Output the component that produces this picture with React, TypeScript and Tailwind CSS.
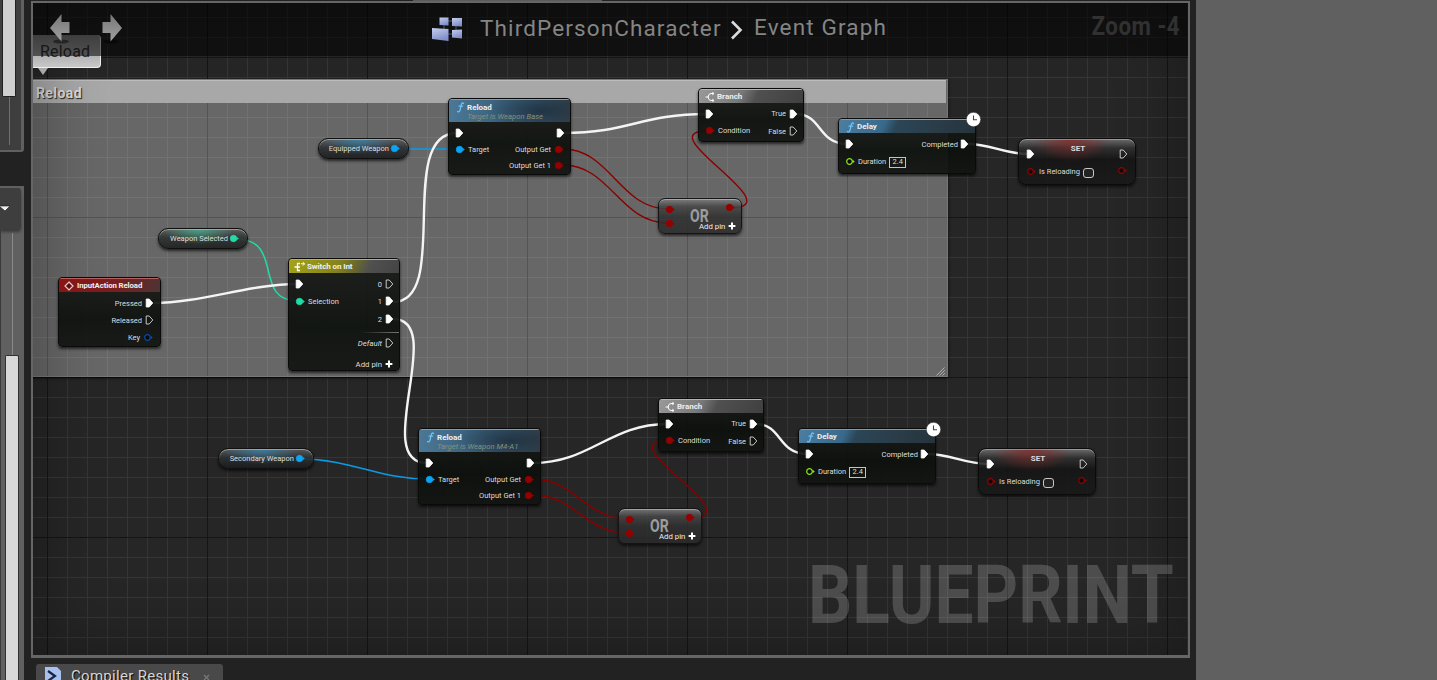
import React from "react";

type Kind = "exec" | "execOpen" | "data" | "dataOpen";

function Pin({ kind, color = "#fff" }: { kind: Kind; color?: string }) {
  if (kind === "exec" || kind === "execOpen") {
    const open = kind === "execOpen";
    return (
      <svg width="9" height="10" viewBox="0 0 9 10" className="-mt-px block shrink-0">
        <path
          d="M1.2 1H4.2L7.8 5L4.2 9H1.2Z"
          fill={open ? "none" : "#fff"}
          stroke={open ? "#d8d8d8" : "#fff"}
          strokeWidth={open ? 0.9 : 0.8}
          strokeLinejoin="round"
        />
      </svg>
    );
  }
  const open = kind === "dataOpen";
  return (
    <svg width="11" height="9" viewBox="0 0 11 9" className="-mt-px block shrink-0">
      <circle cx="4.5" cy="4.5" r={open ? 2.8 : 3.2} fill={open ? "#0a0a0a" : color} stroke={color} strokeWidth={open ? 1.2 : 0.8} />
      <path d="M7.6 2.8L9.8 4.5L7.6 6.2Z" fill={color} />
    </svg>
  );
}

function Plus() {
  return (
    <svg width="8" height="8" viewBox="0 0 8 8" className="-mt-px block shrink-0">
      <path d="M4 0.6V7.4M0.6 4H7.4" stroke="#fff" strokeWidth="2" />
    </svg>
  );
}

function FIcon() {
  return (
    <svg width="9" height="11" viewBox="0 0 9 11" className="block shrink-0">
      <path d="M7.6 1.6C6.8 0.6 5.6 0.8 5.200 2.8L4 8.2C3.6 9.900 2.4 10.2 1.6 9.5M3 4.2H6.600" fill="none" stroke="#6fc0f5" strokeWidth="1.3" strokeLinecap="round" />
    </svg>
  );
}

const nodeBase =
  "absolute flex flex-col overflow-hidden border border-[#0a0a0a] bg-[linear-gradient(180deg,rgba(24,26,24,0.92),rgba(12,16,12,0.93)_60%,rgba(18,20,18,0.93))] shadow-[0_2px_3px_rgba(0,0,0,0.65)] rounded-[4px]";
const blueHead =
  "bg-[radial-gradient(ellipse_45%_90%_at_75%_50%,rgba(24,36,48,0.65),transparent),linear-gradient(90deg,#4b7896,#3a607c_45%,#33536a_75%,#32424c)]";

function ReloadNode({ pos, target }: { pos: string; target: string }) {
  return (
    <div className={`${nodeBase} h-[77px] w-[123px] ${pos}`}>
      <div className={`flex h-[23px] shrink-0 border-t border-[#7ba0b8] pl-[7px] pt-[2px] ${blueHead}`}>
        <FIcon />
        <div className="ml-[2px] flex flex-col">
          <span className="h-[9px] text-[8px] font-bold leading-[11px] text-[#eee]">Reload</span>
          <span className="whitespace-nowrap text-[7.7px] italic leading-[11px] text-[#83917f]">{target}</span>
        </div>
      </div>
      <div className="flex justify-between pt-[3.5px]">
        <div className="flex flex-col pl-[6px]">
          <div className="flex h-4 items-center"><Pin kind="exec" /></div>
          <div className="flex h-4 items-center gap-[2px]"><Pin kind="data" color="#0ba4f4" />Target</div>
        </div>
        <div className="flex flex-col items-end pr-[5px]">
          <div className="flex h-4 items-center"><Pin kind="exec" /></div>
          <div className="flex h-4 items-center gap-[3px]">Output Get<Pin kind="data" color="#960000" /></div>
          <div className="flex h-4 items-center gap-[3px]">Output Get 1<Pin kind="data" color="#960000" /></div>
        </div>
      </div>
    </div>
  );
}

function BranchNode({ pos }: { pos: string }) {
  return (
    <div className={`${nodeBase} h-[54px] w-[106px] ${pos}`}>
      <div className="flex h-[14px] shrink-0 items-center gap-[2px] border-t border-[#b5b5b5] bg-[linear-gradient(115deg,#9a9a9a,#787878_40%,#505050_55%,#404040)] pl-[6px] pt-px">
        <svg width="10" height="10" viewBox="0 0 10 10" className="block">
          <path d="M4 5H0.500M8.500 1.500H6Q3.500 1.500 3 5Q3.500 8.500 6 8.500H8.500M7.300 0.200L9 1.500L7.300 2.800M7.300 7.200L9 8.500L7.300 9.800" fill="none" stroke="#fff" strokeWidth="1" />
        </svg>
        <span className="text-[8px] font-bold text-[#eee]">Branch</span>
      </div>
      <div className="flex justify-between pt-[2.5px]">
        <div className="flex flex-col pl-[6px]">
          <div className="flex h-[17px] items-center"><Pin kind="exec" /></div>
          <div className="flex h-[17px] items-center gap-[2px]"><Pin kind="data" color="#960000" />Condition</div>
        </div>
        <div className="flex flex-col items-end pr-[5px]">
          <div className="flex h-[17px] items-center gap-[3px]">True<Pin kind="exec" /></div>
          <div className="flex h-[18px] items-center gap-[3px]">False<Pin kind="execOpen" /></div>
        </div>
      </div>
    </div>
  );
}

function DelayNode({ pos, clock }: { pos: string; clock: string }) {
  return (
    <>
      <div className={`${nodeBase} h-[56px] w-[138px] ${pos}`}>
        <div className="flex h-[14px] shrink-0 items-center gap-[2px] border-t border-[#6aa3c6] bg-[linear-gradient(115deg,#4b7fa1,#39698a_33%,#2b4657_42%,#2a3d49_70%,#26333b)] pl-[7px] pt-px">
          <FIcon />
          <span className="text-[8px] font-bold text-[#eee]">Delay</span>
        </div>
        <div className="flex justify-between pt-[2.5px]">
          <div className="flex flex-col pl-[6px]">
            <div className="flex h-[18px] items-center"><Pin kind="exec" /></div>
            <div className="flex h-[17px] items-center gap-[2px]">
              <Pin kind="dataOpen" color="#8ee61e" />Duration
              <span className="ml-[1px] flex h-[11px] w-[17px] items-center justify-center border border-[#c4c4c4]">2.4</span>
            </div>
          </div>
          <div className="flex h-[18px] items-center gap-[2px] pr-[6px]">Completed<Pin kind="exec" /></div>
        </div>
      </div>
      <svg width="16" height="16" viewBox="0 0 16 16" className={`absolute ${clock}`}>
        <circle cx="7.500" cy="7.500" r="7.200" fill="#fff" stroke="#222" strokeWidth="0.5" />
        <path d="M7.500 3.500V7.700H11" fill="none" stroke="#444" strokeWidth="1.1" />
      </svg>
    </>
  );
}

function SetNode({ pos }: { pos: string }) {
  return (
    <div className={`absolute flex h-[47px] w-[118px] flex-col overflow-hidden rounded-[8px] border border-[#0b0b0b] bg-[radial-gradient(ellipse_34%_50%_at_45%_0%,rgba(135,40,40,0.8),transparent),linear-gradient(180deg,rgba(115,115,115,0.9),rgba(48,48,48,0.9)_20%,rgba(20,20,20,0.88)_45%,rgba(22,24,22,0.85))] shadow-[inset_0_1px_0_rgba(200,200,200,0.5),0_2px_3px_rgba(0,0,0,0.6)] ${pos}`}>
      <span className="mt-[5px] h-[10px] pl-[2px] text-center text-[8px] font-bold leading-[10px] text-[#ddd]">SET</span>
      <div className="-mt-[5px] flex items-start justify-between px-[7px]">
        <div className="flex flex-col">
          <div className="flex h-[11px] items-center"><Pin kind="exec" /></div>
          <div className="mt-[4px] flex h-[16px] items-center gap-[2px]">
            <Pin kind="dataOpen" color="#960000" />
            <span className="-mt-px">Is Reloading</span>
            <span className="ml-[1px] mt-[2px] block h-[10px] w-[11px] rounded-[3px] border-[1.5px] border-[#c8c8c8] bg-[#222]" />
          </div>
        </div>
        <div className="flex flex-col items-end">
          <div className="flex h-[11px] items-center"><Pin kind="execOpen" /></div>
          <div className="mt-[4px] flex h-[13px] items-center"><Pin kind="dataOpen" color="#960000" /></div>
        </div>
      </div>
    </div>
  );
}

function OrNode({ pos }: { pos: string }) {
  return (
    <div className={`absolute flex h-[36px] w-[84px] overflow-hidden rounded-[7px] border border-[#141414] bg-[linear-gradient(180deg,rgba(130,130,130,0.85),rgba(70,70,70,0.85)_22%,rgba(48,48,48,0.85)_50%,rgba(42,42,42,0.85))] shadow-[inset_0_1px_0_rgba(210,210,210,0.5),0_2px_3px_rgba(0,0,0,0.6)] ${pos}`}>
      <div className="flex flex-col gap-[6px] pl-[6px] pt-[7px]">
        <Pin kind="data" color="#960000" />
        <Pin kind="data" color="#960000" />
      </div>
      <div className="flex grow flex-col pl-[14px] pt-[10px]">
        <span className="h-[14px] origin-left scale-x-[0.78] text-[18px] font-bold leading-[14px] text-[#9d9d9d]">OR</span>
        <span className="ml-[9px] h-[8px] whitespace-nowrap text-[7.8px] leading-[8px] text-[#eee]">Add pin</span>
      </div>
      <div className="-ml-[6px] flex flex-col gap-[11px] pr-[5px] pt-[5px]">
        <Pin kind="data" color="#960000" />
        <div className="pl-[3px]"><Plus /></div>
      </div>
    </div>
  );
}

function VariableNode({ pos, label, color, glow }: { pos: string; label: string; color: string; glow: string }) {
  return (
    <div className={`absolute flex h-[21px] items-center justify-end gap-px rounded-[10px] border border-[#101010] pr-[7px] pt-px shadow-[inset_0_1px_0_rgba(190,190,190,0.65),0_2px_3px_rgba(0,0,0,0.65)] ${glow} ${pos}`}>
      {label}
      <Pin kind="data" color={color} />
    </div>
  );
}

const blueGlow =
  "bg-[radial-gradient(ellipse_40%_80%_at_45%_0%,rgba(55,140,185,0.7),transparent),linear-gradient(180deg,rgba(95,95,95,0.9),rgba(45,48,50,0.9)_45%,rgba(25,27,28,0.9))]";
const greenGlow =
  "bg-[radial-gradient(ellipse_40%_80%_at_45%_0%,rgba(70,190,155,0.7),transparent),linear-gradient(180deg,rgba(95,95,95,0.9),rgba(45,50,48,0.9)_45%,rgba(28,32,30,0.9))]";

function Wires() {
  const white = [
    "M154 303C200 303 250 284 297 284",
    "M393 302C452 302 395 133 457 133",
    "M393 319C448 319 370 463 427 463",
    "M563 133C630 133 640 114 707 114",
    "M796 114C822 114 818 144 847 144",
    "M968 144C990 144 1005 154 1028 154",
    "M533 463C590 463 610 424 667 424",
    "M756 424C782 424 778 454 807 454",
    "M928 454C950 454 965 464 988 464",
  ];
  const red = [
    "M563 149C610 149 620 209 668 209",
    "M563 165C610 165 620 223 668 223",
    "M730 208C795 208 647 131 707 131",
    "M533 479C575 479 585 519 628 519",
    "M533 495C575 495 585 533 628 533",
    "M690 518C755 518 607 441 667 441",
  ];
  return (
    <svg width="1190" height="680" viewBox="0 0 1190 680" className="absolute left-0 top-0" fill="none">
      {red.map((d) => <path key={d} d={d} stroke="#8a0000" strokeWidth="1.4" />)}
      <path d="M397 149H457" stroke="#0b9ae6" strokeWidth="1.4" />
      <path d="M301 459C350 459 380 479 427 479" stroke="#0b9ae6" strokeWidth="1.5" />
      <path d="M236 239C285 239 252 301 298 301" stroke="#22dba6" strokeWidth="1.5" />
      {white.map((d) => <path key={d} d={d} stroke="#f4f4f4" strokeWidth="2.4" />)}
    </svg>
  );
}

function SwitchNode() {
  return (
    <div className={`${nodeBase} left-[288px] top-[258px] h-[113px] w-[112px]`}>
      <div className="flex h-[14px] shrink-0 items-center gap-[2px] border-t border-[#b5b46a] bg-[linear-gradient(115deg,#a5a318,#84821c_45%,#68672e_60%,#505050_72%,#444)] pl-[5px] pt-px">
        <svg width="11" height="10" viewBox="0 0 11 10" className="block">
          <path d="M0.500 5H6M6 1.500H3.500V8.500H6" fill="none" stroke="#fff" strokeWidth="1.3" />
          <path d="M7 1.800H10.500M8.900 0.200L10.600 1.800L8.900 3.600" fill="none" stroke="#fff" strokeWidth="1" />
        </svg>
        <span className="text-[8px] font-bold tracking-[-0.1px] text-[#eee]">Switch on Int</span>
      </div>
      <div className="flex justify-between pt-[2.5px]">
        <div className="flex flex-col pl-[6px]">
          <div className="flex h-[17.5px] items-center"><Pin kind="exec" /></div>
          <div className="flex h-[17px] items-center gap-[2px]"><Pin kind="data" color="#22dba6" />Selection</div>
        </div>
        <div className="flex flex-col items-end pr-[5px]">
          <div className="flex h-[17.5px] items-center gap-[3px]">0<Pin kind="execOpen" /></div>
          <div className="flex h-[17.5px] items-center gap-[3px]">1<Pin kind="exec" /></div>
          <div className="flex h-[17.5px] items-center gap-[3px]">2<Pin kind="exec" /></div>
          <div className="-mr-[5px] mt-[4px] h-px w-[38px] bg-gradient-to-r from-transparent to-[#777]" />
          <div className="mt-[2px] flex h-[17px] items-center gap-[3px] text-[7.8px] italic">Default<Pin kind="execOpen" /></div>
          <div className="mt-[4px] flex h-[17px] items-center gap-[3px] pr-px text-[7.8px]">Add pin<Plus /></div>
        </div>
      </div>
    </div>
  );
}

function InputNode() {
  return (
    <div className={`${nodeBase} left-[58px] top-[277px] h-[70px] w-[103px]`}>
      <div className="flex h-[14px] shrink-0 items-center gap-[3px] border-t border-[#b86060] bg-[linear-gradient(100deg,#8c1414,#7c1c1c_45%,#6c2424_70%,#4d3434)] pl-[5px]">
        <svg width="10" height="10" viewBox="0 0 10 10" className="block">
          <path d="M5 1L9 5L5 9L1 5Z" fill="#5a1010" stroke="#e8c8c8" strokeWidth="1.2" />
        </svg>
        <span className="text-[7.8px] font-bold tracking-[-0.1px] text-[#eee]">InputAction Reload</span>
      </div>
      <div className="flex flex-col items-end pr-[6px] pt-[3px]">
        <div className="flex h-[17px] items-center gap-[3px]">Pressed<Pin kind="exec" /></div>
        <div className="flex h-[17px] items-center gap-[3px]">Released<Pin kind="execOpen" /></div>
        <div className="flex h-[17px] items-center gap-[3px]">Key<Pin kind="dataOpen" color="#0a4bb0" /></div>
      </div>
    </div>
  );
}

function Sidebar() {
  return (
    <div className="flex w-[24px] shrink-0 flex-col">
      <div className="flex h-[152px] overflow-hidden rounded-br-[3px] border-b-2 border-r-[3px] border-[#606060] bg-[#3e3e3e]">
        <div className="ml-[2px] flex w-[14px] flex-col items-center">
          <div className="h-[97px] w-[14px] shrink-0 rounded-b-[2px] border-x border-b border-[#202020] bg-[#cfcfcf]" />
          <div className="h-[48px] w-px bg-[#6e6e6e]" />
        </div>
      </div>
      <div className="mt-[34px] flex h-[494px] flex-col border-r-[3px] border-t-2 border-[#606060] bg-[#606060]">
        <div className="flex h-[41px] shrink-0 items-center rounded-r-[3px] bg-[#3e3e3e] shadow-[0_3px_3px_rgba(0,0,0,0.4)]">
          <svg width="12" height="8" viewBox="0 0 12 8" className="block">
            <path d="M-1 1H10L5 6Z" fill="#f0f0f0" stroke="#161616" strokeWidth="0.6" />
          </svg>
        </div>
        <div className="flex grow border-l border-[#3a3a3a]">
          <div className="ml-[4px] mt-[4px] flex w-[14px] flex-col items-center">
            <div className="h-[122px] w-px shrink-0 bg-[#8a8a8a]" />
            <div className="w-[14px] grow rounded-t-[2px] border-x border-t border-[#303030] bg-[#d8d8d8]" />
          </div>
        </div>
      </div>
    </div>
  );
}

function BackArrow({ flip = false }: { flip?: boolean }) {
  return (
    <svg width="22" height="34" viewBox="0 0 22 34" className={flip ? "block -scale-x-100" : "block"}>
      <defs>
        <linearGradient id="arrow" x1="0" y1="0" x2="0" y2="1">
          <stop offset="0" stopColor="#777" />
          <stop offset="1" stopColor="#a0a0a0" />
        </linearGradient>
      </defs>
      <ellipse cx="12" cy="28.500" rx="8" ry="2" fill="#000" opacity="0.45" />
      <path d="M1 15L12.500 1V9H20.500V20H12.500V28.500Z" fill="url(#arrow)" />
    </svg>
  );
}

/* Canvas nodes use window coordinates; the layer is shifted by the viewport origin. */
function Canvas() {
  return (
    <div className="absolute -left-[33px] -top-[3px] h-[680px] w-[1230px] text-[7.5px] leading-none text-[#dedede]">
      <div className="absolute left-[20px] top-[79px] h-[298px] w-[928px] border border-[#777] bg-[#676767] shadow-[0_1px_3px_rgba(0,0,0,0.7)]">
        <div className="flex h-[23px] w-[925px] items-center border-t border-[#bbb] bg-[#a8a8a8] pl-[15px] pt-[2px] text-[14px] font-bold tracking-[0.4px] text-[#d9d9d9] [text-shadow:1px_1px_1px_#222]">Reload</div>
        <svg width="10" height="9" viewBox="0 0 10 9" className="absolute bottom-0 right-px">
          <path d="M0.500 8.500L8.500 0.500M3.500 8.500L8.800 3.200M6.500 8.500L8.800 6.200" stroke="#b0b0b0" strokeWidth="1" />
        </svg>
      </div>
      <div className="absolute left-[20px] top-[103px] h-[273px] w-[927px] bg-[linear-gradient(90deg,#545454_1px,transparent_1px),linear-gradient(180deg,#545454_1px,transparent_1px),linear-gradient(90deg,#727272_1px,transparent_1px),linear-gradient(180deg,#727272_1px,transparent_1px)] bg-[size:160px_160px,160px_160px,20px_20px,20px_20px] bg-[position:27px_0,0_114px,7px_0,0_14px]" />
      <div className="absolute left-[33px] top-[3px] h-[653px] w-[1155px] shadow-[inset_0_0_60px_10px_rgba(0,0,0,0.28)]" />
      <Wires />
      <VariableNode pos="left-[318px] top-[138px] w-[91px]" label="Equipped Weapon" color="#0ba4f4" glow={blueGlow} />
      <VariableNode pos="left-[158px] top-[228px] w-[90px]" label="Weapon Selected" color="#22dba6" glow={greenGlow} />
      <VariableNode pos="left-[218px] top-[448px] w-[96px]" label="Secondary Weapon" color="#0ba4f4" glow={blueGlow} />
      <InputNode />
      <SwitchNode />
      <ReloadNode pos="left-[448px] top-[98px]" target="Target is Weapon Base" />
      <BranchNode pos="left-[698px] top-[88px]" />
      <OrNode pos="left-[658px] top-[198px]" />
      <DelayNode pos="left-[838px] top-[118px]" clock="left-[966px] top-[112px]" />
      <SetNode pos="left-[1018px] top-[138px]" />
      <ReloadNode pos="left-[418px] top-[428px]" target="Target is Weapon M4-A1" />
      <BranchNode pos="left-[658px] top-[398px]" />
      <OrNode pos="left-[618px] top-[508px]" />
      <DelayNode pos="left-[798px] top-[428px]" clock="left-[926px] top-[422px]" />
      <SetNode pos="left-[978px] top-[448px]" />
      <div className="absolute left-[20px] top-[35px] flex h-[33px] w-[81px] items-center rounded-[4px] border-b border-r border-[#eee] bg-[linear-gradient(180deg,#8a8a8a,#b0b0b0_60%,#c8c8c8)] pl-[20px] pt-px text-[16px] tracking-[0.2px] text-[#333]">Reload</div>
      <svg width="10" height="8" viewBox="0 0 10 8" className="absolute left-[38px] top-[68px]">
        <path d="M0 0H10L5 7Z" fill="#a8a8a8" />
      </svg>
    </div>
  );
}

function TitleBar() {
  return (
    <div className="absolute left-0 top-0 flex h-[53px] w-full items-start bg-black/55">
      <div className="flex w-[399px] shrink-0 gap-[30px] pl-[16px] pt-[10px]">
        <BackArrow />
        <BackArrow flip />
      </div>
      <svg width="32" height="26" viewBox="0 0 32 26" className="mt-[13px] block shrink-0">
        <defs>
          <linearGradient id="bp" x1="0" y1="0" x2="0.4" y2="1">
            <stop offset="0" stopColor="#c6cdee" />
            <stop offset="1" stopColor="#7f8fc9" />
          </linearGradient>
        </defs>
        <path d="M12 8V16M24 8V18M14 5H24M14 18H24" stroke="#555a70" strokeWidth="1" />
        <path d="M0 12L16.500 13V25L0 23Z" fill="url(#bp)" />
        <path d="M7.500 1.500H16.500V9.500L7.500 9Z" fill="url(#bp)" />
        <path d="M20 2H30V10.500L20 10Z" fill="url(#bp)" />
        <path d="M20 14L30 13.500V22.500L20 21.500Z" fill="url(#bp)" />
      </svg>
      <span className="ml-[16px] mt-[12px] w-[243px] shrink-0 whitespace-nowrap text-[22.5px] leading-[26px] tracking-[1.12px] text-[#858585]">ThirdPersonCharacter</span>
      <svg width="14" height="20" viewBox="0 0 14 20" className="ml-[7px] mt-[17px] block shrink-0">
        <path d="M2 1.500L10.500 10L2 18.500" fill="none" stroke="#dcdcdc" strokeWidth="2.600" />
      </svg>
      <span className="ml-[10px] mt-[11px] whitespace-nowrap text-[22.5px] leading-[26px] tracking-[1.15px] text-[#858585]">Event Graph</span>
      <span className="ml-auto mr-[8px] mt-[9px] origin-right scale-x-[0.86] whitespace-nowrap text-[26px] font-bold leading-[28px] tracking-[0.6px] text-[#313131]">Zoom -4</span>
    </div>
  );
}

export default function App() {
  return (
    <div className="flex h-[680px] w-[1437px] overflow-hidden bg-[#606060] font-['Roboto',sans-serif]">
      <div className="flex w-[1196px] shrink-0 bg-[#222]">
        <Sidebar />
        <div className="ml-[7px] flex w-[1159px] flex-col">
          <div className="flex h-px shrink-0">
            <div className="ml-[382px] w-[189px] bg-[#5a5a5a]" />
          </div>
          <div className="h-[657px] w-[1159px] shrink-0 border-2 border-b-[3px] border-[#666]">
            <div className="relative h-full w-full overflow-hidden bg-[#262626] bg-[linear-gradient(90deg,#151515_1px,transparent_1px),linear-gradient(180deg,#151515_1px,transparent_1px),linear-gradient(90deg,#353535_1px,transparent_1px),linear-gradient(180deg,#353535_1px,transparent_1px)] bg-[size:160px_160px,160px_160px,20px_20px,20px_20px] bg-[position:14px_0,0_54px,14px_0,0_14px]">
              <Canvas />
              <TitleBar />
              <span className="absolute left-[775px] top-[551px] origin-left scale-x-[0.846] whitespace-nowrap text-[82px] font-bold leading-[82px] text-white/18">BLUEPRINT</span>
            </div>
          </div>
          <div className="ml-[5px] mt-[6px] flex h-[30px] w-[187px] shrink-0 items-start rounded-t-[3px] bg-[#494949] pl-[8px] pt-[3px]">
            <svg width="17" height="20" viewBox="0 0 17 20" className="block shrink-0">
              <path d="M1 0H13L17 4V20H1Z" fill="#a9c1f0" />
              <path d="M4 4L11 9L4 14" fill="none" stroke="#1d2440" strokeWidth="2.200" />
            </svg>
            <span className="ml-[10px] -mt-px whitespace-nowrap text-[15px] leading-[20px] tracking-[0.3px] text-[#d6d6d6] [text-shadow:1px_1px_1px_#000]">Compiler Results</span>
            <svg width="7" height="7" viewBox="0 0 7 7" className="ml-[14px] mt-[7px] block">
              <path d="M1 1L6 6M6 1L1 6" stroke="#777" strokeWidth="1.200" />
            </svg>
          </div>
        </div>
      </div>
    </div>
  );
}
